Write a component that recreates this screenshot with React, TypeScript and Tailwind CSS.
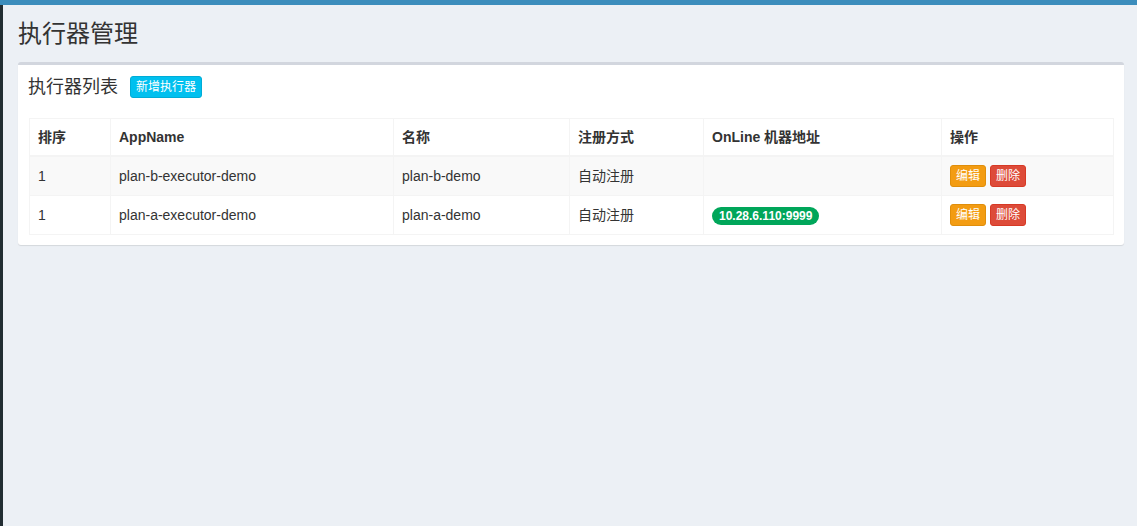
import React from 'react';

type Executor = {
    order: number;
    appName: string;
    title: string;
    addressType: string;
    online: string[];
};

const executors: Executor[] = [
    { order: 1, appName: 'plan-b-executor-demo', title: 'plan-b-demo', addressType: '自动注册', online: [] },
    { order: 1, appName: 'plan-a-executor-demo', title: 'plan-a-demo', addressType: '自动注册', online: ['10.28.6.110:9999'] },
];

const columns = [
    { label: '排序', width: 'w-[81px]' },
    { label: 'AppName', width: 'w-[283px]' },
    { label: '名称', width: 'w-[176px]' },
    { label: '注册方式', width: 'w-[134px]' },
    { label: 'OnLine 机器地址', width: 'w-[238px]' },
    { label: '操作', width: '' },
];

const XsButton: React.FC<{ label: string; tone: 'info' | 'warning' | 'danger' }> = ({ label, tone }) => {
    const tones = {
        info: 'bg-[#00c0ef] border-[#00acd6]',
        warning: 'bg-[#f39c12] border-[#e08e0b]',
        danger: 'bg-[#dd4b39] border-[#d73925]',
    };
    return (
        <button className={`inline-block h-[22px] px-[5px] text-[12px] leading-[18px] text-white border rounded-[3px] ${tones[tone]}`}>
            {label}
        </button>
    );
};

const App: React.FC = () => {
    return (
        <div
            className="flex flex-col h-[526px] min-h-screen bg-[#ecf0f5] text-[#333] text-[14px]"
            style={{ fontFamily: '"Liberation Sans", Arial, "Noto Sans CJK SC", sans-serif' }}
        >
            {/* top navbar strip */}
            <div className="h-[5px] bg-[#3c8dbc] shrink-0" />

            <div className="flex flex-1">
                {/* sidebar edge */}
                <div className="w-[3px] bg-[#222d32] shrink-0" />

                <div className="flex-1">
                    <section className="pl-[15px] pr-[13px] pt-[15px]">
                        <h1 className="text-[24px] leading-[27px] font-normal">执行器管理</h1>
                    </section>

                    <section className="pl-[15px] pr-[13px] py-[15px]">
                        <div className="bg-white rounded-[3px] border-t-[3px] border-[#d2d6de] shadow-[0_1px_1px_rgba(0,0,0,0.1)]">
                            <div className="flex items-center pl-[10px] pr-[10px] pt-[11px] pb-[10px]">
                                <h3 className="text-[18px] leading-[22px] font-normal">执行器列表</h3>
                                <div className="ml-[12px] flex">
                                    <XsButton label="新增执行器" tone="info" />
                                </div>
                            </div>

                            <div className="pl-[11px] pr-[10px] py-[10px]">
                                <table className="w-full border border-[#f4f4f4] border-collapse table-fixed">
                                    <thead>
                                        <tr>
                                            {columns.map((c) => (
                                                <th
                                                    key={c.label}
                                                    className={`${c.width} text-left font-bold px-[8px] py-[8px] leading-[20px] border border-[#f4f4f4] border-b-2`}
                                                >
                                                    {c.label}
                                                </th>
                                            ))}
                                        </tr>
                                    </thead>
                                    <tbody>
                                        {executors.map((e, i) => (
                                            <tr key={e.appName} className={i % 2 === 0 ? 'bg-[#f9f9f9]' : 'bg-white'}>
                                                <td className="px-[8px] py-[8px] leading-[22px] border border-[#f4f4f4]">{e.order}</td>
                                                <td className="px-[8px] py-[8px] leading-[22px] border border-[#f4f4f4]">{e.appName}</td>
                                                <td className="px-[8px] py-[8px] leading-[22px] border border-[#f4f4f4]">{e.title}</td>
                                                <td className="px-[8px] py-[8px] leading-[22px] border border-[#f4f4f4]">{e.addressType}</td>
                                                <td className="px-[8px] py-[8px] leading-[22px] border border-[#f4f4f4]">
                                                    {e.online.map((addr) => (
                                                        <span
                                                            key={addr}
                                                            className="inline-block align-middle bg-[#00a65a] text-white text-[12px] font-bold leading-[12px] px-[7px] py-[3px] rounded-[10px]"
                                                        >
                                                            {addr}
                                                        </span>
                                                    ))}
                                                </td>
                                                <td className="px-[8px] py-[8px] leading-[22px] border border-[#f4f4f4]">
                                                    <div className="flex gap-[4px]">
                                                        <XsButton label="编辑" tone="warning" />
                                                        <XsButton label="删除" tone="danger" />
                                                    </div>
                                                </td>
                                            </tr>
                                        ))}
                                    </tbody>
                                </table>
                            </div>
                        </div>
                    </section>
                </div>
            </div>
        </div>
    );
};

export default App;
